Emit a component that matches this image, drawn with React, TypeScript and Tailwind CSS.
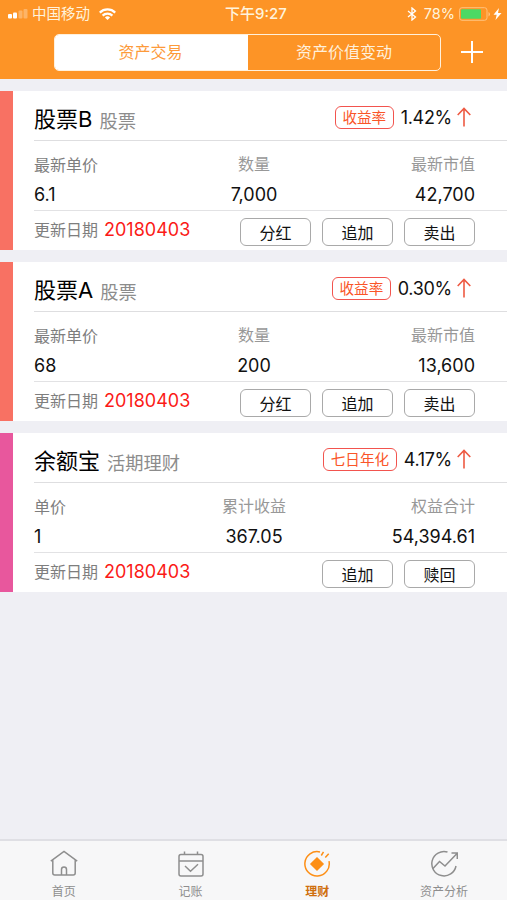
import React from "react";

type Holding = {
  name: string;
  kind: string;
  bar: string;
  rateLabel: string;
  rate: string;
  cells: [string, string][];
  actions: string[];
};

const holdings: Holding[] = [
  {
    name: "股票B",
    kind: "股票",
    bar: "bg-[#f87163]",
    rateLabel: "收益率",
    rate: "1.42%",
    cells: [["最新单价", "6.1"], ["数量", "7,000"], ["最新市值", "42,700"]],
    actions: ["分红", "追加", "卖出"],
  },
  {
    name: "股票A",
    kind: "股票",
    bar: "bg-[#f87163]",
    rateLabel: "收益率",
    rate: "0.30%",
    cells: [["最新单价", "68"], ["数量", "200"], ["最新市值", "13,600"]],
    actions: ["分红", "追加", "卖出"],
  },
  {
    name: "余额宝",
    kind: "活期理财",
    bar: "bg-[#e8579d]",
    rateLabel: "七日年化",
    rate: "4.17%",
    cells: [["单价", "1"], ["累计收益", "367.05"], ["权益合计", "54,394.61"]],
    actions: ["追加", "赎回"],
  },
];

function StatusBar() {
  return (
    <div className="grid h-[28px] grid-cols-[1fr_auto_1fr] items-center pl-2 pr-[5px] text-[14.5px] leading-[28px] text-[#fff3dc]">
      <div className="flex items-center">
        <svg width="20" height="10" viewBox="0 0 20 10" fill="#fff">
          <rect x="0" y="5" width="4" height="4.5" rx="1" />
          <rect x="5" y="3.5" width="4" height="6" rx="1" />
          <rect x="10.5" y="1.5" width="4" height="8" rx="1" opacity=".3" />
          <rect x="15.5" y="0" width="4" height="9.5" rx="1" opacity=".3" />
        </svg>
        <span className="ml-1">中国移动</span>
        <svg className="ml-[9px]" width="17" height="12" viewBox="0 0 17 12" fill="none" stroke="#fff" strokeWidth="2.2">
          <path d="M.8 4.600a11 11 0 0 1 15.400 0M3.600 7.600a7 7 0 0 1 9.800 0" />
          <path d="M8.500 12 5.900 9.500a3.800 3.800 0 0 1 5.200 0z" fill="#fff" stroke="none" />
        </svg>
      </div>
      <div className="pl-[2px] text-[15px] font-medium">下午9:27</div>
      <div className="flex items-center justify-end">
        <svg width="10" height="14" viewBox="0 0 10 14" fill="none" stroke="#fff" strokeWidth="1.3">
          <path d="m1 4 7.500 6L5 13V1l3.500 3L1 10" />
        </svg>
        <span className="ml-[7px]">78%</span>
        <svg className="ml-1" width="32" height="14" viewBox="0 0 32 14">
          <rect x=".5" y=".7" width="27.500" height="12.600" rx="2.500" fill="none" stroke="#ffc27d" />
          <rect x="2" y="2.200" width="20" height="9.600" rx="1" fill="#4cd964" />
          <path d="M29.500 5v4.500q1.500-.8 1.500-2.250T29.500 5" fill="#ffc27d" />
        </svg>
        <svg className="ml-[2px]" width="9" height="12" viewBox="0 0 9 12" fill="#fff">
          <path d="M6 0 .5 6.700h3.200L2.500 12 8.500 5H5z" />
        </svg>
      </div>
    </div>
  );
}

function Header() {
  return (
    <header className="h-[79px] bg-[#fd9426]">
      <StatusBar />
      <div className="flex pl-[54px] pt-[6px]">
        <div className="flex h-[37px] w-[387px] overflow-hidden rounded-[5px] border border-[#fff0dc] text-[16px] leading-[35px]">
          <div className="w-[193px] bg-white pr-[2px] text-center text-[#fd9a3a]">资产交易</div>
          <div className="flex-1 text-center text-[#fff0dc]">资产价值变动</div>
        </div>
        <svg className="ml-[20px] mt-[7px]" width="22" height="22" viewBox="0 0 22 22" stroke="#fff" strokeWidth="2">
          <path d="M0 11h22M11 0v22" />
        </svg>
      </div>
    </header>
  );
}

function Card({ item }: { item: Holding }) {
  return (
    <section className="flex h-[159px] bg-white">
      <div className={`w-[13px] shrink-0 ${item.bar}`} />
      <div className="ml-[21px] flex-1">
        <div className="flex h-[50px] items-center border-b border-[#dedee0] pr-9">
          <div className="flex flex-1 items-start pt-[9px]">
            <span className="text-[22px] leading-[30px] text-black">{item.name}</span>
            <span className="ml-[7px] pt-[2px] text-[18.3px] leading-[30px] text-[#8c8c8c]">{item.kind}</span>
          </div>
          <span className="mt-1 h-[23px] rounded-[6px] border border-[#f2544e] px-[6.5px] text-[14.6px] leading-[22px] text-[#fa5528]">
            {item.rateLabel}
          </span>
          <span className="ml-[7px] mt-1 text-[18px] leading-[24px] tracking-[-0.3px] text-[#111]">{item.rate}</span>
          <svg className="ml-[5px] mt-[3px]" width="14" height="20" viewBox="0 0 14 20" fill="none" stroke="#ee5a43" strokeWidth="1.6">
            <path d="M7 19.500V1.500M.7 8 7 1.500 13.300 8" />
          </svg>
        </div>
        <div className="grid h-[70px] grid-cols-3 border-b border-[#e2e2e4] pr-8">
          {item.cells.map(([label, value], i) => (
            <div key={label} className={["text-left", "pr-px text-center", "text-right"][i]}>
              <div className={`h-[42px] text-[16px] leading-[24px] ${i === 0 ? "pt-[12px] text-[#7e7e7e]" : "pt-[11px] text-[#989898]"}`}>
                {label}
              </div>
              <div className="text-[18px] leading-[23px] text-[#111]">{value}</div>
            </div>
          ))}
        </div>
        <div className="flex pr-8">
          <div className="flex flex-1 items-baseline pt-[7px]">
            <span className="text-[16px] leading-[24px] text-[#7e7e7e]">更新日期</span>
            <span className="ml-[6px] text-[18px] leading-[24px] text-[#fb1a17]">20180403</span>
          </div>
          <div className="flex gap-[11px] pt-[7px]">
            {item.actions.map((action) => (
              <button key={action} className="h-[28px] w-[71px] rounded-[6px] border border-[#a9a9a9] pt-px text-[16px] leading-[26px] text-[#111]">
                {action}
              </button>
            ))}
          </div>
        </div>
      </div>
    </section>
  );
}

const tabs = [
  {
    label: "首页",
    icon: (
      <>
        <path d="M.8 11.200 14 1.500l13.200 9.700M2.800 10v13q0 2 2 2h18.400q2 0 2-2V10" />
        <path d="M11.500 25v-5.500a2.500 2.500 0 0 1 5 0V25" />
      </>
    ),
  },
  {
    label: "记账",
    icon: (
      <>
        <rect x="2" y="4.500" width="24" height="21.500" rx="2" />
        <path d="M2 11h24M7.500 1.500v3M20.500 1.500v3M8 16l5.500 5.200 7.500-7" />
      </>
    ),
  },
  {
    label: "理财",
    icon: (
      <>
        <path d="M17 1.900A12.200 12.200 0 1 0 26 11.200" />
        <path d="m14 8 6 6-6 6-6-6z" fill="currentColor" />
        <path d="m18.300 5.500 2.200-3.700M22.300 7.500l3.400-3.700" />
      </>
    ),
  },
  {
    label: "资产分析",
    icon: (
      <>
        <path d="M17.500 2A12.200 12.200 0 1 0 26 16" />
        <path d="m2.500 19 7-7.500 5.500 4.500L27 3.500M21.500 3H27.300v6" />
      </>
    ),
  },
];

function TabBar() {
  return (
    <nav className="grid h-[61px] grid-cols-4 border-t-2 border-[#dfdfe4] bg-[#f7f7f8]">
      {tabs.map((tab) => (
        <div key={tab.label} className={`flex flex-col items-center pl-px pt-[9px] ${tab.label === "理财" ? "font-medium text-[#fd8f16]" : "text-[#8e8e8e]"}`}>
          <svg width="28" height="28" viewBox="0 0 28 28" fill="none" stroke="currentColor" strokeWidth="1.5">
            {tab.icon}
          </svg>
          <span className={`mt-[5px] text-[12px] leading-[18px] ${tab.label === "理财" ? "font-bold text-[#cf6f0e]" : ""}`}>{tab.label}</span>
        </div>
      ))}
    </nav>
  );
}

export default function App() {
  return (
    <div className="flex h-[900px] w-[507px] flex-col overflow-hidden bg-[#efeff4] font-[Inter,'Noto_Sans_CJK_SC',sans-serif]">
      <Header />
      <main className="flex flex-1 flex-col gap-3 pt-3">
        {holdings.map((item) => (
          <Card key={item.name} item={item} />
        ))}
      </main>
      <TabBar />
    </div>
  );
}
